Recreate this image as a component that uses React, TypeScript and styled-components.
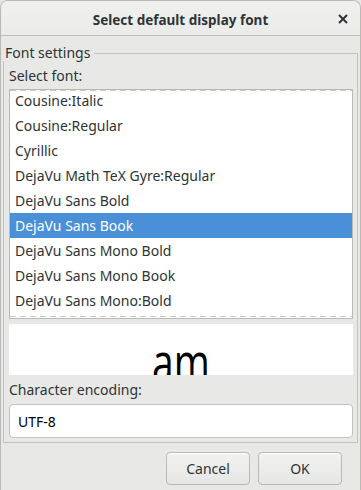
import React from "react";
import styled, { createGlobalStyle } from "styled-components";

const GlobalStyle = createGlobalStyle`
  html, body { margin: 0; padding: 0; background: #e8e8e7; }
  body { font-family: "Noto Sans", "DejaVu Sans", sans-serif; font-size: 14px; color: #2e3436; }
  * { box-sizing: border-box; }
`;

const Window = styled.div`
  width: 361px;
  height: 490px;
  background: #e8e8e7;
  border-radius: 8px 8px 0 0;
  border: 1px solid #b9b9b6;
  border-bottom: none;
  overflow: hidden;
  display: flex;
  flex-direction: column;
`;

const TitleBar = styled.div`
  height: 35px;
  flex: none;
  position: relative;
  display: flex;
  align-items: center;
  justify-content: center;
  background: linear-gradient(#f0f0ef, #ebebea);
  border-bottom: 1px solid #bdbdba;
`;

const Title = styled.div`
  font-weight: bold;
  font-size: 13.5px;
  color: #2e3436;
  margin-top: 4px;
`;

const CloseButton = styled.div`
  position: absolute;
  right: 12px;
  top: 13px;
  width: 10px;
  height: 10px;
  display: flex;
`;

const Body = styled.div`
  flex: 1;
  display: flex;
  flex-direction: column;
  padding: 9px 2px 0 2px;
`;

const Frame = styled.fieldset`
  margin: 0;
  padding: 0 4px 5px 5px;
  border: 1px solid #c2c2bf;
  height: 398px;
  display: flex;
  flex-direction: column;
`;

const Legend = styled.legend`
  padding: 0 4px 0 3px;
  margin-left: -7px;
  font-size: 14px;
  color: #2e3436;
  line-height: 16px;
`;

const Label = styled.div<{ $top: number }>`
  margin-top: ${(p) => p.$top}px;
  height: 18px;
  line-height: 18px;
  color: #2e3436;
`;

const ListBox = styled.div`
  margin-top: 4px;
  height: 230px;
  background: #ffffff;
  border: 1px solid #b9b9b6;
  position: relative;
  overflow: hidden;
`;

const Dashes = styled.div<{ $edge: "top" | "bottom" }>`
  position: absolute;
  left: 0;
  right: 0;
  ${(p) => (p.$edge === "top" ? "top: 0px;" : "bottom: 1px;")}
  height: 1px;
  background: repeating-linear-gradient(90deg, #c8c8c6 0 6px, transparent 6px 10px);
  z-index: 2;
`;

const Rows = styled.div`
  margin-top: -2px;
`;

const Row = styled.div<{ $selected?: boolean }>`
  height: 25px;
  line-height: 25px;
  padding-left: 5px;
  white-space: nowrap;
  color: ${(p) => (p.$selected ? "#ffffff" : "#2e3436")};
  background: ${(p) => (p.$selected ? "#4a90d9" : "transparent")};
`;

const Preview = styled.div`
  margin-top: 5px;
  height: 51px;
  background: #ffffff;
  position: relative;
  overflow: hidden;
  display: flex;
  justify-content: center;
`;

const PreviewText = styled.div`
  font-family: "Open Sans", "Noto Sans", sans-serif;
  font-size: 39px;
  line-height: 39px;
  color: #000000;
  margin-top: 9px;
  transform: scaleY(1.4);
  transform-origin: top center;
`;

const Entry = styled.div`
  margin-top: 5px;
  height: 34px;
  background: #ffffff;
  border: 1px solid #c2c2bf;
  border-radius: 4px;
  padding-left: 8px;
  display: flex;
  align-items: center;
  color: #000000;
`;

const ButtonRow = styled.div`
  display: flex;
  justify-content: flex-end;
  gap: 8px;
  padding: 9px 16px 0 0;
`;

const Button = styled.div`
  width: 84px;
  height: 33px;
  border: 1px solid #b9b9b6;
  border-radius: 4px;
  background: linear-gradient(#f2f2f1, #e6e6e4);
  display: flex;
  align-items: center;
  justify-content: center;
  color: #2e3436;
  box-shadow: inset 0 1px #ffffff;
`;

const fonts = [
  "Cousine:Italic",
  "Cousine:Regular",
  "Cyrillic",
  "DejaVu Math TeX Gyre:Regular",
  "DejaVu Sans Bold",
  "DejaVu Sans Book",
  "DejaVu Sans Mono Bold",
  "DejaVu Sans Mono Book",
  "DejaVu Sans Mono:Bold",
];

export default function App() {
  return (
    <>
      <GlobalStyle />
      <Window>
        <TitleBar>
          <Title>Select default display font</Title>
          <CloseButton>
            <svg width="10" height="10" viewBox="0 0 10 10">
              <path d="M1 1 L9 9 M9 1 L1 9" stroke="#2e3436" strokeWidth="2" strokeLinecap="butt" />
            </svg>
          </CloseButton>
        </TitleBar>
        <Body>
          <Frame>
            <Legend>Font settings</Legend>
            <Label $top={6}>Select font:</Label>
            <ListBox>
              <Dashes $edge="top" />
              <Rows>
                {fonts.map((f) => (
                  <Row key={f} $selected={f === "DejaVu Sans Book"}>
                    {f}
                  </Row>
                ))}
              </Rows>
              <Dashes $edge="bottom" />
            </ListBox>
            <Preview>
              <PreviewText>am</PreviewText>
            </Preview>
            <Label $top={6}>Character encoding:</Label>
            <Entry>UTF-8</Entry>
          </Frame>
          <ButtonRow>
            <Button>Cancel</Button>
            <Button>OK</Button>
          </ButtonRow>
        </Body>
      </Window>
    </>
  );
}
